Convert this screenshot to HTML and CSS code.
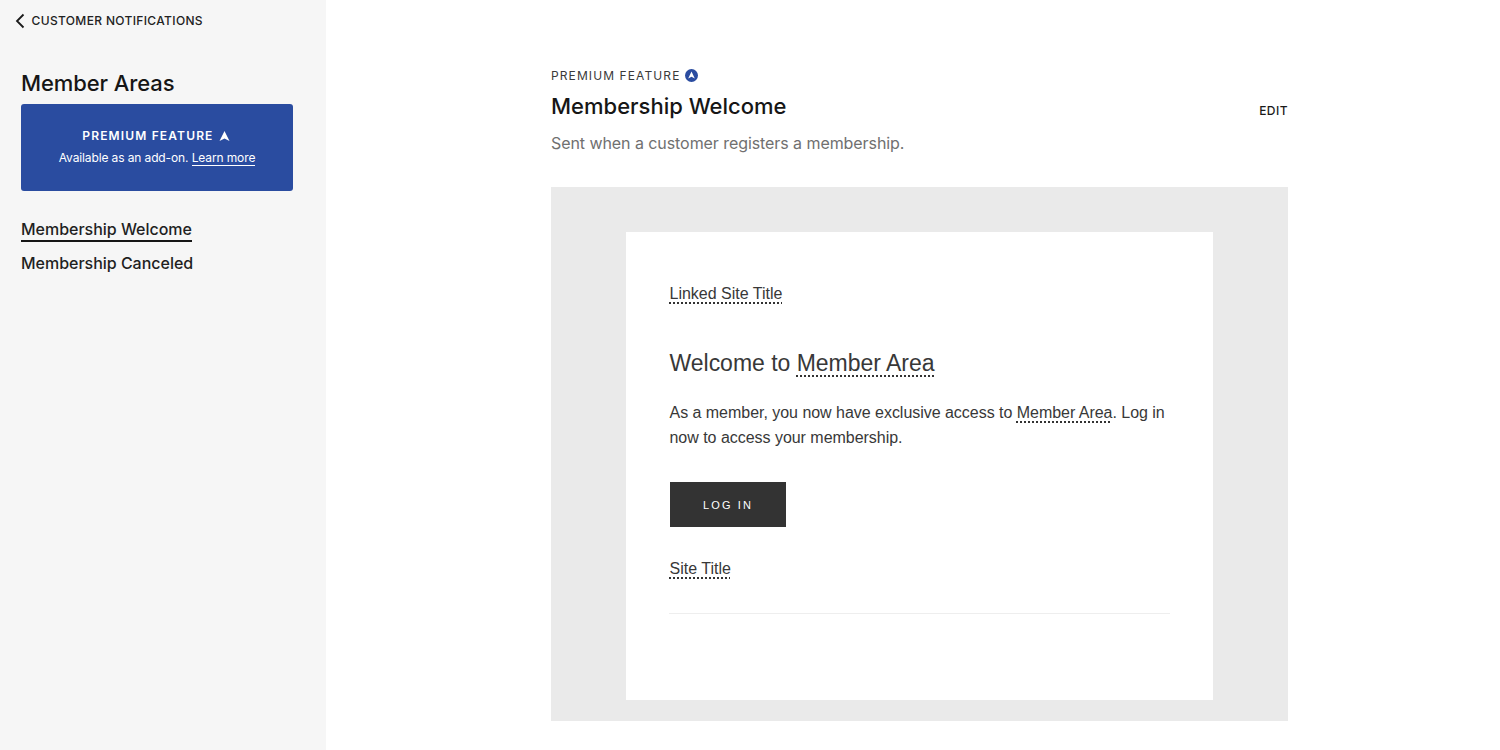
FILE: index.html
```
<!DOCTYPE html>
<html lang="en">
<head>
<meta charset="utf-8">
<title>Membership Welcome</title>
<link rel="stylesheet" href="styles.css">
</head>
<body>
<div class="app">
  <aside class="sidebar">
    <a class="back">
      <svg class="back-icon" width="10" height="16" viewBox="0 0 10 16"><path d="M8.5 1.5 2 8l6.5 6.5" fill="none" stroke="#1a1a1a" stroke-width="1.8"/></svg>
      <span>CUSTOMER NOTIFICATIONS</span>
    </a>
    <h2 class="side-title">Member Areas</h2>
    <div class="promo">
      <div class="promo-title">PREMIUM FEATURE
        <svg class="promo-icon" width="11" height="10" viewBox="0 0 11 10"><path d="M5.5 0 10.5 10 5.5 7.5.5 10Z" fill="#fff"/></svg>
      </div>
      <div class="promo-text">Available as an add-on. <a class="promo-link">Learn more</a></div>
    </div>
    <nav class="side-nav">
      <a class="nav-item active">Membership Welcome</a>
      <a class="nav-item">Membership Canceled</a>
    </nav>
  </aside>
  <main class="main">
    <div class="content">
      <div class="eyebrow">PREMIUM FEATURE
        <svg width="13" height="13" viewBox="0 0 13 13"><circle cx="6.5" cy="6.5" r="6.5" fill="#2a4ca0"/><path d="M6.5 2.6 9.8 9.4 6.5 7.8 3.2 9.4Z" fill="#fff"/></svg>
      </div>
      <div class="head-row">
        <h1 class="title">Membership Welcome</h1>
        <a class="edit">EDIT</a>
      </div>
      <p class="subtitle">Sent when a customer registers a membership.</p>
      <section class="preview">
        <div class="email">
          <div class="site-link"><span class="var">Linked Site Title</span></div>
          <h3 class="email-heading">Welcome to <span class="var var-large">Member Area</span></h3>
          <p class="email-body">As a member, you now have exclusive access to <span class="var">Member Area</span>. Log in now to access your membership.</p>
          <a class="login">LOG IN</a>
          <div class="footer-link"><span class="var">Site Title</span></div>
          <hr class="rule">
        </div>
      </section>
    </div>
  </main>
</div>
</body>
</html>
```
FILE: styles.css
```
* { box-sizing: border-box; }
html, body { margin: 0; height: 100%; overflow: hidden; background: #fff; }
body { font-family: Inter, "Liberation Sans", sans-serif; color: #1a1a1a; }
.app { display: flex; height: 750px; }

.sidebar { width: 326px; flex: none; background: #f6f6f6; padding: 12px 33px 0 21px; }
.back { display: flex; align-items: center; gap: 7px; height: 17px; margin-left: -6px; font-size: 12px; font-weight: 500; letter-spacing: .35px; color: #222; }
.back span { margin-left: -.5px; }
.side-title { margin: 40px 0 0; font-size: 22px; line-height: 28px; font-weight: 500; letter-spacing: -.1px; color: #161616; }
.promo { margin-top: 7px; height: 87px; background: #2a4ca0; border-radius: 3px; color: #fff; text-align: center; padding-top: 24px; }
.promo-title { font-size: 12px; line-height: 16px; font-weight: 600; letter-spacing: 1.15px; padding-right: 2px; }
.promo-icon { margin-left: 1px; vertical-align: -1px; }
.promo-text { margin-top: 6px; font-size: 12px; line-height: 16px; letter-spacing: -.12px; }
.promo-link { border-bottom: 1px solid #fff; }
.side-nav { display: flex; flex-direction: column; align-items: flex-start; margin-top: 27px; }
.nav-item { font-size: 16px; line-height: 22px; font-weight: 500; letter-spacing: -.02px; color: #1f1f1f; margin-bottom: 12px; }
.nav-item.active { border-bottom: 2px solid #161616; height: 24px; margin-bottom: 10px; }

.main { flex: 1; padding: 68px 0 0 225px; }
.content { width: 737px; }
.eyebrow { display: flex; align-items: center; gap: 5px; height: 15px; font-size: 12px; letter-spacing: 1.1px; color: #3a3a3a; }
.head-row { display: flex; justify-content: space-between; align-items: flex-end; margin-top: 9px; }
.title { margin: 0; font-size: 22px; line-height: 28px; font-weight: 500; color: #161616; }
.edit { font-size: 12px; line-height: 16px; font-weight: 500; letter-spacing: .45px; color: #1a1a1a; margin-bottom: 1px; }
.subtitle { margin: 13px 0 0; font-size: 16px; line-height: 20px; letter-spacing: -.07px; color: #707070; }
.preview { margin-top: 34px; height: 534px; background: #eaeaea; padding: 45px 75px 0; }
.email { width: 587px; height: 468px; background: #fff; padding: 52px 43px 0 43.5px; font-family: "Liberation Sans", Arial, sans-serif; color: #383838; }
.var { text-decoration: underline dotted #333 2px; text-underline-offset: 3px; text-decoration-skip-ink: none; }
.var-large { text-underline-offset: 4px; }
.site-link { font-size: 16px; line-height: 20px; }
.email-heading { margin: 44px 0 0; font-size: 23px; line-height: 30px; font-weight: 400; letter-spacing: -.02px; }
.email-body { margin: 22px 0 0; font-size: 16px; line-height: 25px; letter-spacing: -.03px; }
.login { display: flex; align-items: center; justify-content: center; width: 116px; height: 45px; margin-top: 32px; background: #333; color: #fff; font-size: 11px; letter-spacing: 2.1px; padding-left: 1px; }
.footer-link { margin-top: 32px; font-size: 16px; line-height: 20px; }
.rule { width: 501px; margin: 34px 0 0 -1px; border: 0; border-top: 1px solid #eee; }
```
